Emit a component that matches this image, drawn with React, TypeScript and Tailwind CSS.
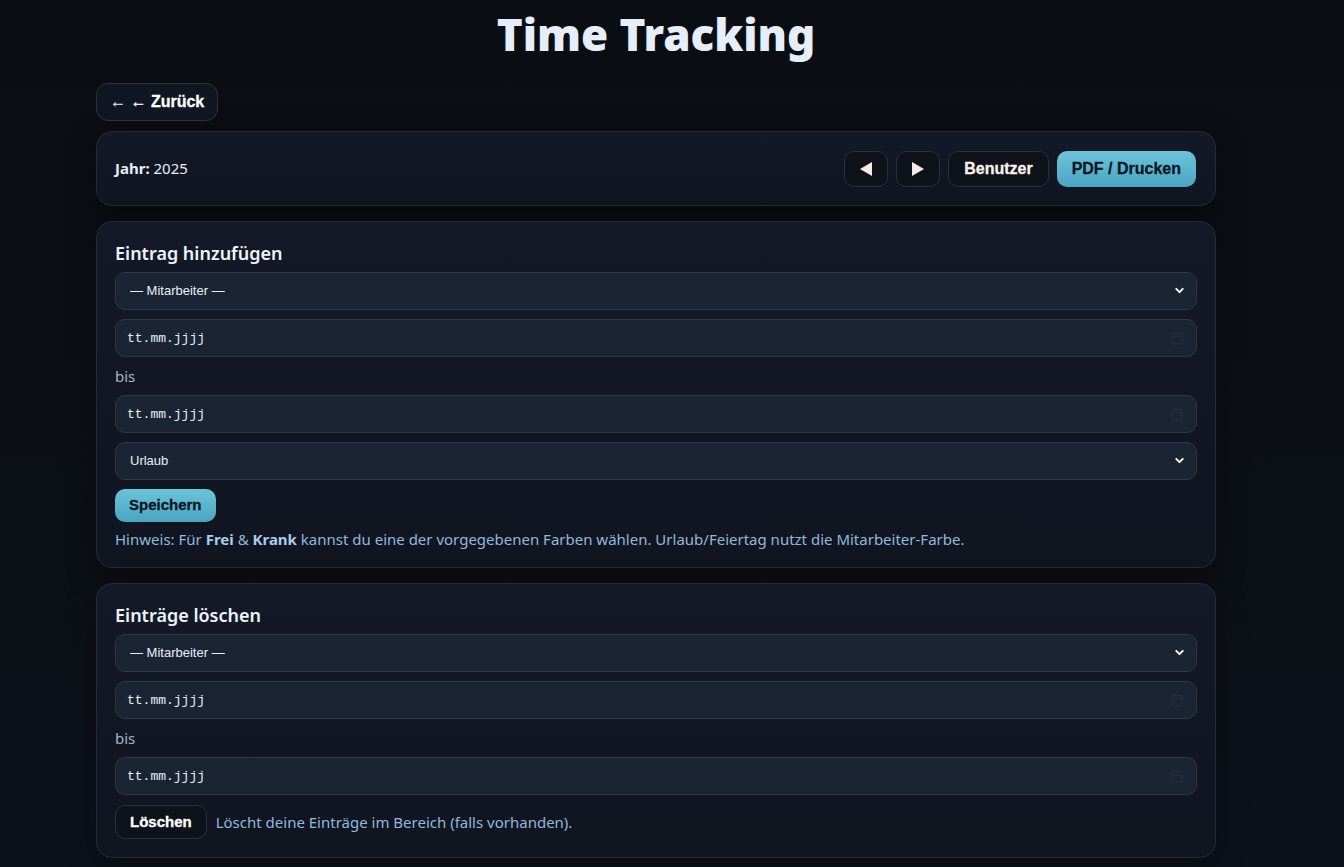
import { ChevronDown, Calendar } from 'lucide-react'

const sans = { fontFamily: '"Noto Sans", "Open Sans", sans-serif' }
const btnFont = { fontFamily: '"Liberation Sans", Arial, sans-serif' }

function SelectBox({ value }: { value: string }) {
  return (
    <div className="relative">
      <select
        defaultValue={value}
        className="h-[38px] w-full appearance-none rounded-[10px] border border-[#2e3848] bg-[#1b2433] px-[14px] text-[13px] text-[#e8eef8] outline-none"
        style={btnFont}
      >
        <option>{value}</option>
      </select>
      <ChevronDown className="pointer-events-none absolute right-[11px] top-[12px] h-[13px] w-[13px] text-white" strokeWidth={3.5} />
    </div>
  )
}

function DateBox() {
  return (
    <div className="relative">
      <input
        type="text"
        readOnly
        value="tt.mm.jjjj"
        className="h-[38px] w-full rounded-[10px] border border-[#2e3848] bg-[#1b2433] px-[11px] text-[13px] text-[#e8eef8] outline-none"
        style={{ fontFamily: '"Liberation Mono", monospace' }}
      />
      <Calendar className="pointer-events-none absolute right-[13px] top-[12px] h-[14px] w-[14px] text-[#262e3b]" strokeWidth={2} />
    </div>
  )
}

export default function App() {
  return (
    <main
      className="min-h-[867px] bg-gradient-to-b from-[#0a0d12] to-[#0d121a] text-[#e6edf8]"
      style={sans}
    >
      <div className="ml-[96px] w-[1120px] pb-[10px]">
        <h1 className="pt-[5px] text-center text-[44px] font-black leading-[58px] text-[#e6eefc]">Time Tracking</h1>

        <div className="mt-[20px]">
          <button
            className="h-[38px] rounded-[12px] border border-[#2a3140] bg-[#111722] px-[13px] text-[16px] font-bold text-white [-webkit-text-stroke:0.3px_currentColor]"
            style={btnFont}
          >
            <span className="text-[#d7dbe3]">←</span> ← Zurück
          </button>
        </div>

        <section className="mt-[10px] flex h-[75px] items-center justify-between rounded-[16px] border border-[#242b38] bg-gradient-to-b from-[#131926] to-[#101520] pl-[18px] pr-[19px] shadow-[0_10px_30px_rgba(0,0,0,0.35)]">
          <div className="text-[15px]">
            <span className="font-bold">Jahr:</span> 2025
          </div>
          <div
            className="flex items-center gap-[8px] text-[16px] font-bold [-webkit-text-stroke:0.3px_currentColor]"
            style={btnFont}
          >
            <button className="flex h-[36px] w-[44px] items-center justify-center rounded-[10px] border border-[#2a3140] bg-[#0d121b]">
              <svg width="12" height="14" viewBox="0 0 12 14"><path d="M12 0 L0 7 L12 14 Z" fill="#fbe9e3" /></svg>
            </button>
            <button className="flex h-[36px] w-[44px] items-center justify-center rounded-[10px] border border-[#2a3140] bg-[#0d121b]">
              <svg width="12" height="14" viewBox="0 0 12 14"><path d="M0 0 L12 7 L0 14 Z" fill="#fbe9e3" /></svg>
            </button>
            <button className="h-[36px] rounded-[10px] border border-[#2a3140] bg-[#0d121b] px-[15px] text-[#fdf0ea]">Benutzer</button>
            <button className="h-[36px] rounded-[10px] bg-gradient-to-b from-[#6cc4da] to-[#4aa5c3] px-[15px] text-[#0b1622]">PDF / Drucken</button>
          </div>
        </section>

        <section className="mt-[15px] rounded-[16px] border border-[#242b38] bg-gradient-to-b from-[#131926] to-[#101520] px-[18px] pb-[17px] pt-[18px] shadow-[0_10px_30px_rgba(0,0,0,0.35)]">
          <h2 className="text-[18px] font-semibold leading-[26px] text-[#eef3fb]">Eintrag hinzufügen</h2>
          <div className="mt-[6px] flex flex-col gap-[9px]">
            <SelectBox value="— Mitarbeiter —" />
            <DateBox />
            <div className="text-[15px] leading-[20px] text-[#a9b4c4]">bis</div>
            <DateBox />
            <SelectBox value="Urlaub" />
          </div>
          <button
            className="mt-[9px] h-[33px] rounded-[10px] bg-gradient-to-b from-[#6cc4da] to-[#4aa5c3] px-[14px] text-[15px] font-bold text-[#0b1622] [-webkit-text-stroke:0.3px_currentColor]"
            style={btnFont}
          >
            Speichern
          </button>
          <p className="mt-[6px] text-[15px] leading-[22px] text-[#8fb9dc]">
            Hinweis: Für <b className="text-[#a9cdec]">Frei</b> &amp; <b className="text-[#a9cdec]">Krank</b> kannst du eine der vorgegebenen Farben wählen. Urlaub/Feiertag nutzt die Mitarbeiter-Farbe.
          </p>
        </section>

        <section className="mt-[15px] rounded-[16px] border border-[#242b38] bg-gradient-to-b from-[#131926] to-[#101520] px-[18px] pb-[18px] pt-[18px] shadow-[0_10px_30px_rgba(0,0,0,0.35)]">
          <h2 className="text-[18px] font-semibold leading-[26px] text-[#eef3fb]">Einträge löschen</h2>
          <div className="mt-[6px] flex flex-col gap-[9px]">
            <SelectBox value="— Mitarbeiter —" />
            <DateBox />
            <div className="text-[15px] leading-[20px] text-[#a9b4c4]">bis</div>
            <DateBox />
          </div>
          <div className="mt-[10px] flex items-center gap-[9px]">
            <button
              className="h-[34px] rounded-[10px] border border-[#2a3140] bg-[#0d121b] px-[14px] text-[15px] font-bold text-white [-webkit-text-stroke:0.3px_currentColor]"
              style={btnFont}
            >
              Löschen
            </button>
            <span className="text-[15px] text-[#8fb9dc]">Löscht deine Einträge im Bereich (falls vorhanden).</span>
          </div>
        </section>
      </div>
    </main>
  )
}
